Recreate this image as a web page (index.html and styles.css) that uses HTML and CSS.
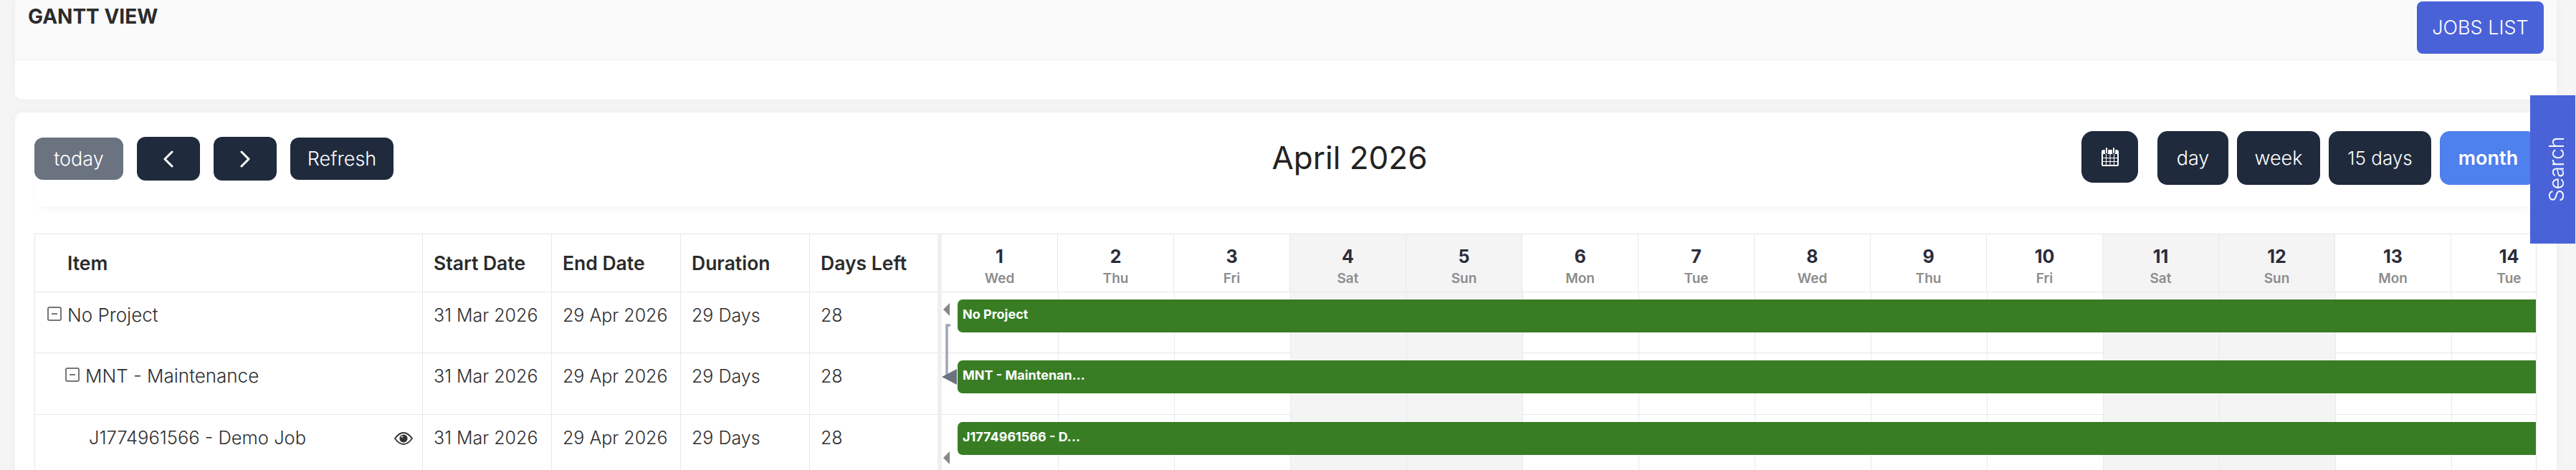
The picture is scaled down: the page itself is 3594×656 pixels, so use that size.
FILE: index.html
```html
<!DOCTYPE html>
<html lang="en">
<head>
    <meta charset="UTF-8">
    <title>Gantt View</title>
    <link rel="stylesheet" href="styles.css">
</head>
<body>

    <!-- Page heading card -->
    <div class="card heading-card">
        <div class="heading-bar">
            <h1>GANTT VIEW</h1>
            <button class="btn-jobs">JOBS LIST</button>
        </div>
    </div>

    <!-- Gantt card -->
    <div class="card gantt-card">
        <div class="toolbar">
            <div class="tool-group tool-left">
                <button class="btn btn-muted">today</button>
                <button class="btn btn-dark btn-arrow">
                    <svg width="16" height="24" viewBox="0 0 16 24"><path d="M13 2 L3 12 L13 22" fill="none" stroke="#fff" stroke-width="3" stroke-linecap="round" stroke-linejoin="round"/></svg>
                </button>
                <button class="btn btn-dark btn-arrow">
                    <svg width="16" height="24" viewBox="0 0 16 24"><path d="M3 2 L13 12 L3 22" fill="none" stroke="#fff" stroke-width="3" stroke-linecap="round" stroke-linejoin="round"/></svg>
                </button>
                <button class="btn btn-dark btn-refresh">Refresh</button>
            </div>
            <h2 class="month-title">April 2026</h2>
            <div class="tool-group tool-right">
                <button class="btn btn-dark btn-picker">
                    <svg width="24" height="26" viewBox="0 0 24 26">
                        <path d="M1 6 Q1 4 3 4 H21 Q23 4 23 6 V24 Q23 25 22 25 H2 Q1 25 1 24 Z" fill="none" stroke="#fff" stroke-width="2"/>
                        <path d="M1 6 Q1 4 3 4 H21 Q23 4 23 6 V9 H1 Z" fill="#fff"/>
                        <path d="M7 1 V7 M17 1 V7" stroke="#1f2a3c" stroke-width="4.4" stroke-linecap="round"/>
                        <path d="M7 1 V7 M17 1 V7" stroke="#fff" stroke-width="2" stroke-linecap="round"/>
                        <path d="M6.5 9 V25 M12 9 V25 M17.5 9 V25 M1 14.5 H23 M1 19.5 H23" stroke="#fff" stroke-width="1"/>
                    </svg>
                </button>
                <div class="view-group">
                    <button class="btn btn-dark btn-view view-day">day</button>
                    <button class="btn btn-dark btn-view view-week">week</button>
                    <button class="btn btn-dark btn-view view-15">15 days</button>
                    <button class="btn btn-view view-month">month</button>
                </div>
            </div>
        </div>

        <div class="gantt">
            <!-- Left hand grid -->
            <div class="grid-pane">
                <div class="grid-row grid-head">
                    <div class="cell cell-item"><span class="item-label">Item</span></div>
                    <div class="cell">Start Date</div>
                    <div class="cell">End Date</div>
                    <div class="cell">Duration</div>
                    <div class="cell">Days Left</div>
                </div>
                <div class="grid-row">
                    <div class="cell cell-item">
                        <span class="toggle"></span><span class="item-label">No Project</span>
                    </div>
                    <div class="cell">31 Mar 2026</div>
                    <div class="cell">29 Apr 2026</div>
                    <div class="cell">29 Days</div>
                    <div class="cell">28</div>
                </div>
                <div class="grid-row">
                    <div class="cell cell-item level-2">
                        <span class="toggle"></span><span class="item-label">MNT - Maintenance</span>
                    </div>
                    <div class="cell">31 Mar 2026</div>
                    <div class="cell">29 Apr 2026</div>
                    <div class="cell">29 Days</div>
                    <div class="cell">28</div>
                </div>
                <div class="grid-row">
                    <div class="cell cell-item level-3">
                        <span class="item-label">J1774961566 - Demo Job</span>
                        <svg class="eye" width="26" height="18" viewBox="0 0 26 18">
                            <path d="M1 9 C5 3.5 9 1 13 1 C17 1 21 3.5 25 9 C21 14.5 17 17 13 17 C9 17 5 14.5 1 9 Z" fill="none" stroke="#333" stroke-width="1.8"/>
                            <circle cx="13" cy="9" r="5.6" fill="#333"/>
                            <circle cx="11" cy="6.5" r="1.6" fill="#aaa"/>
                        </svg>
                    </div>
                    <div class="cell">31 Mar 2026</div>
                    <div class="cell">29 Apr 2026</div>
                    <div class="cell">29 Days</div>
                    <div class="cell">28</div>
                </div>
            </div>

            <div class="gutter"></div>

            <!-- Timeline -->
            <div class="timeline">
                <div class="tl-head">
                    <div class="day"><b>1</b><span>Wed</span></div>
                    <div class="day"><b>2</b><span>Thu</span></div>
                    <div class="day"><b>3</b><span>Fri</span></div>
                    <div class="day weekend"><b>4</b><span>Sat</span></div>
                    <div class="day weekend"><b>5</b><span>Sun</span></div>
                    <div class="day"><b>6</b><span>Mon</span></div>
                    <div class="day"><b>7</b><span>Tue</span></div>
                    <div class="day"><b>8</b><span>Wed</span></div>
                    <div class="day"><b>9</b><span>Thu</span></div>
                    <div class="day"><b>10</b><span>Fri</span></div>
                    <div class="day weekend"><b>11</b><span>Sat</span></div>
                    <div class="day weekend"><b>12</b><span>Sun</span></div>
                    <div class="day"><b>13</b><span>Mon</span></div>
                    <div class="day"><b>14</b><span>Tue</span></div>
                </div>
                <div class="tl-body">
                    <div class="tl-cols">
                        <div class="col"></div>
                        <div class="col"></div>
                        <div class="col"></div>
                        <div class="col weekend"></div>
                        <div class="col weekend"></div>
                        <div class="col"></div>
                        <div class="col"></div>
                        <div class="col"></div>
                        <div class="col"></div>
                        <div class="col"></div>
                        <div class="col weekend"></div>
                        <div class="col weekend"></div>
                        <div class="col"></div>
                        <div class="col"></div>
                    </div>
                    <div class="tl-row"><div class="bar">No Project</div></div>
                    <div class="tl-row"><div class="bar">MNT - Maintenan...</div></div>
                    <div class="tl-row"><div class="bar">J1774961566 - D...</div></div>
                    <!-- Dependency arrows, they sit over the bars -->
                    <svg class="links" width="24" height="248" viewBox="0 0 24 248">
                        <path d="M12 46 H7 V116" fill="none" stroke="#a0a6b5" stroke-width="3.5"/>
                        <path d="M2 24 L11 15 V33 Z" fill="#888"/>
                        <path d="M0 118 L21 107 V129 Z" fill="#6b7280"/>
                        <path d="M2 231 L11 222 V240 Z" fill="#888"/>
                    </svg>
                </div>
            </div>
        </div>
    </div>

    <button class="search-tab">Search</button>

</body>
</html>
```

FILE: styles.css
```css
html, body {
    height: 656px;
    overflow: hidden;
}

body {
    margin: 0;
    padding: 0 27px 0 21px;
    background-color: #f5f5f5;
    font-family: Inter, "Liberation Sans", sans-serif;
    font-weight: 300;
    font-size: 25px;
    color: #2f2f2f;
}

button {
    font-family: inherit;
    border: none;
    cursor: pointer;
}

.card {
    background: #fff;
    border-radius: 10px;
    box-shadow: 0 0 14px rgba(0, 0, 0, 0.04);
}

.heading-card {
    height: 139px;
    border-radius: 0 0 10px 10px;
}

.heading-bar {
    display: flex;
    justify-content: space-between;
    align-items: flex-start;
    height: 84px;
    padding: 2px 18px 0 18px;
    box-sizing: border-box;
    background: #fafafa;
    border-bottom: 1px solid #f0f0f6;
}

h1 {
    margin: 4px 0 0;
    font-size: 28px;
    line-height: 34px;
    font-weight: 700;
    color: #2b2b2b;
}

.btn-jobs {
    width: 177px;
    height: 73px;
    background: #4a62d8;
    color: #fff;
    font-size: 27px;
    font-weight: 300;
    border-radius: 8px;
    padding: 0;
}

.gantt-card {
    margin-top: 18px;
    height: 520px;
    padding: 26px 28px 0 27px;
}

.toolbar {
    display: flex;
    height: 105px;
    margin-bottom: 38px;
    box-shadow: 0 6px 12px -6px rgba(0, 0, 0, 0.07);
}

.tool-group {
    display: flex;
}

.tool-left {
    width: 814px;
    align-items: center;
    height: 61px;
    margin-top: 8px;
    gap: 19px;
}

.tool-right {
    align-items: flex-start;
    gap: 27px;
}

.month-title {
    flex: 1;
    margin: 0;
    font-size: 44px;
    font-weight: 400;
    line-height: 74px;
    text-align: center;
    color: #222;
}

.btn {
    color: #fff;
    font-size: 27px;
    font-weight: 300;
    border-radius: 12px;
    padding: 0;
}

.btn-muted {
    width: 124px;
    height: 59px;
    background: #6b7280;
}

.btn-dark {
    background: #1f2a3c;
}

.btn-arrow {
    width: 88px;
    height: 61px;
    display: flex;
    align-items: center;
    justify-content: center;
}

.btn-refresh {
    width: 144px;
    height: 59px;
}

.btn-picker {
    width: 79px;
    height: 72px;
    border-radius: 16px;
    display: flex;
    align-items: center;
    justify-content: center;
}

.view-group {
    display: flex;
    gap: 12px;
}

.btn-view {
    height: 75px;
    border-radius: 14px;
}

.view-day { width: 99px; }
.view-week { width: 116px; }
.view-15 { width: 143px; font-size: 26px; }

.view-month {
    width: 135px;
    background: #4e80ee;
    font-weight: 600;
}

/* Table + timeline */
.gantt {
    display: flex;
    height: 330px;
    border-top: 1px solid #e6e6ec;
    border-left: 1px solid #e6e6ec;
}

.grid-pane {
    width: 1259px;
    flex: none;
}

.grid-row {
    display: grid;
    grid-template-columns: 540px 180px 180px 180px 179px;
    height: 86px;
    border-bottom: 1px solid #e6e6ec;
    box-sizing: border-box;
}

.grid-head + .grid-row {
    height: 85px;
}

.grid-row:last-child {
    border-bottom: none;
}

.cell {
    padding: 17px 0 0 15px;
    border-left: 1px solid #e9e9ed;
    line-height: 30px;
    white-space: nowrap;
}

.cell-item {
    border-left: none;
    display: flex;
    align-items: flex-start;
    padding-left: 17px;
    position: relative;
    font-size: 26px;
}

.grid-row.grid-head {
    height: 81px;
    font-weight: 600;
    font-size: 26.5px;
    color: #2b2b2b;
}

.grid-head .cell {
    padding-top: 25px;
}

.grid-head .item-label {
    padding-left: 28px;
    font-size: 26.5px;
}

.toggle {
    width: 16px;
    height: 16px;
    margin: 3px 8px 0 0;
    border: 2px solid #777;
    border-radius: 3px;
    position: relative;
    flex: none;
}

.toggle::after {
    content: "";
    position: absolute;
    left: 4px;
    right: 4px;
    top: 7px;
    height: 2px;
    background: #777;
}

.level-2 {
    padding-left: 42px;
}

.level-3 {
    padding-left: 75px;
    font-size: 25.5px;
}

.eye {
    position: absolute;
    right: 13px;
    top: 24px;
}

.gutter {
    width: 6px;
    flex: none;
    background: #efefef;
}

.timeline {
    flex: 1;
    min-width: 0;
    overflow: hidden;
    border-right: 1px solid #e6e6ec;
}

.tl-head {
    display: flex;
    height: 81px;
    border-bottom: 1px solid #e6e6ec;
    box-sizing: border-box;
}

.day {
    flex: 0 0 162px;
    box-sizing: border-box;
    border-right: 1px solid #e9e9ed;
    display: flex;
    flex-direction: column;
    align-items: center;
    padding-top: 15px;
}

.day.weekend {
    background: #f4f4f4;
}

.day b {
    font-size: 25px;
    line-height: 32px;
    font-weight: 700;
    color: #2c2c3a;
}

.day span {
    font-size: 19px;
    line-height: 29px;
    font-weight: 600;
    color: #8c8c8c;
}

.tl-body {
    position: relative;
    height: 249px;
}

.tl-cols {
    position: absolute;
    left: 1px;
    top: 0;
    bottom: 0;
    display: flex;
    z-index: 1;
}

.col {
    flex: 0 0 162px;
    box-sizing: border-box;
    border-right: 1px solid #e9e9ed;
}

.col.weekend {
    background: #f4f4f4;
}

.tl-row {
    height: 86px;
    box-sizing: border-box;
    border-bottom: 1px solid #e6e6ec;
    padding: 10px 0 0 22px;
}

.tl-cols + .tl-row {
    height: 85px;
}

.bar {
    position: relative;
    z-index: 2;
    height: 46px;
    padding-left: 7px;
    background: #387d23;
    border-radius: 7px 0 0 7px;
    color: #fff;
    font-size: 18px;
    font-weight: 700;
    line-height: 42px;
}

.links {
    position: absolute;
    left: 0;
    top: 0;
    z-index: 3;
}

/* Side tab, floats over the page */
.search-tab {
    position: fixed;
    left: 3530px;
    top: 133px;
    width: 63px;
    height: 207px;
    padding: 0 12px 0 0;
    background: #4a62d8;
    color: #fff;
    font-size: 28px;
    font-weight: 300;
    writing-mode: vertical-rl;
    transform: rotate(180deg);
}
```
